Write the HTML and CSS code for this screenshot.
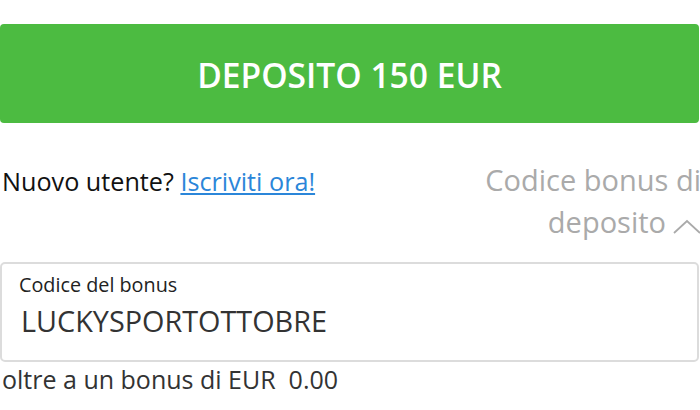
FILE: index.html
```html
<!DOCTYPE html>
<html lang="it">
<head>
<meta charset="utf-8">
<link rel="stylesheet" href="styles.css">
</head>
<body>
<div class="page">
  <button class="deposit-btn" type="button">DEPOSITO 150 EUR</button>
  <div class="row">
    <div class="signup">Nuovo utente? <a href="#" class="link">Iscriviti ora!</a></div>
    <div class="bonus-toggle">Codice bonus di<br>deposito<svg class="chevron" width="28" height="15" viewBox="0 0 28 15"><path d="M1 14 L14 2 L27 14" fill="none" stroke="#aaa" stroke-width="1.8"/></svg></div>
  </div>
  <div class="field">
    <div class="field-label">Codice del bonus</div>
    <div class="field-value">LUCKYSPORTOTTOBRE</div>
  </div>
  <div class="note">oltre a un bonus di EUR&nbsp; 0.00</div>
</div>
</body>
</html>
```

FILE: styles.css
```css
html, body {
  margin: 0;
  padding: 0;
  background: #fff;
}
body {
  font-family: "Open Sans", "Liberation Sans", sans-serif;
  color: #222;
  overflow: hidden;
}
.page {
  width: 699px;
  padding-top: 24px;
}
.deposit-btn {
  display: block;
  width: 699px;
  height: 99px;
  margin: 0;
  border: none;
  border-radius: 4px;
  background: #4cbb41;
  color: #fff;
  font-family: "Open Sans", sans-serif;
  font-weight: 600;
  font-size: 33.6px;
  padding: 2px 0 0 0;
  cursor: pointer;
}
.row {
  display: flex;
  justify-content: space-between;
  align-items: flex-start;
  margin-top: 40px;
  height: 99px;
}
.signup {
  font-size: 25.2px;
  color: #111;
  padding-left: 2px;
  line-height: 36px;
}
.link {
  color: #2b86d9;
  text-decoration: underline;
}
.bonus-toggle {
  text-align: right;
  font-size: 29px;
  line-height: 42px;
  color: #aaa;
  margin-top: -4px;
  margin-right: -2px;
  white-space: nowrap;
}
.chevron {
  margin-left: 7px;
  vertical-align: -1px;
}
.field {
  box-sizing: border-box;
  width: 699px;
  height: 100px;
  border: 2px solid #dcdcdc;
  border-radius: 5px;
  padding: 8px 0 0 17px;
}
.field-label {
  font-size: 19.8px;
  line-height: 26px;
  color: #222;
}
.field-value {
  font-size: 28.8px;
  line-height: 46px;
  color: #333;
  padding-left: 2px;
}
.note {
  font-size: 25px;
  line-height: 34px;
  color: #333;
  padding-left: 2px;
}
```
